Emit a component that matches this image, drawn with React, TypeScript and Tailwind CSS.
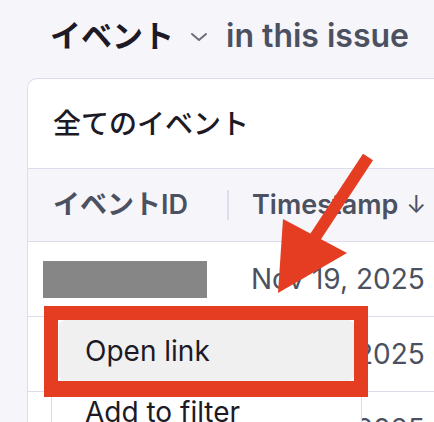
const FONT = "font-['Inter','Noto_Sans_CJK_JP',sans-serif]"

const ROWS = [
  { id: 'row-1', time: 'Nov 19, 2025 01:42:18 PM', redacted: true },
  { id: 'row-2', time: 'Nov 19, 2025 01:40:05 PM', redacted: false },
  { id: 'row-3', time: 'Nov 19, 2025 01:37:51 PM', redacted: false },
]

function ChevronDown() {
  return (
    <svg width="18" height="10" viewBox="0 0 18 10" fill="none" className="shrink-0">
      <polyline points="2,2 9,8 16,2" stroke="#6e6c7a" strokeWidth="2" strokeLinecap="round" strokeLinejoin="round" />
    </svg>
  )
}

function Arrow() {
  return (
    <svg className="pointer-events-none absolute left-0 top-0" width="434" height="422" viewBox="0 0 434 422">
      <line x1="368" y1="157" x2="312" y2="242" stroke="#e53d22" strokeWidth="12" />
      <polygon points="283,219 347,253 278,293" fill="#e53d22" />
    </svg>
  )
}

export default function App() {
  return (
    <div className={`relative h-[422px] w-[434px] overflow-hidden bg-[#f6f5fa] ${FONT}`}>
      <header className="flex h-[78px] items-center pb-[6px] pl-[50px]">
        <h1 className="text-[31px] font-bold text-[#1d1a26]">イベント</h1>
        <span className="ml-[16px] mt-[2px]">
          <ChevronDown />
        </span>
        <span className="ml-[18px] text-[32px] font-semibold text-[#4b5160]">in this issue</span>
      </header>

      <section className="ml-[27px] w-[700px] rounded-tl-[10px] border border-r-0 border-[#dedbee] bg-white">
        <div className="flex h-[89px] items-center px-[25px]">
          <h2 className="text-[28px] font-medium text-[#1d1a26]">全てのイベント</h2>
        </div>

        <div className="flex h-[74px] items-center border-y border-[#dedbee] bg-[#f6f5fa] text-[27px] font-semibold text-[#4b5160]">
          <div className="flex w-[199px] items-center pl-[25px]">イベントID</div>
          <div className="h-[30px] w-[2px] bg-[#e0dcee]" />
          <div className="flex items-center gap-[8px] pl-[23px]">
            <span>Timestamp</span>
            <span className="text-[24px] font-normal">↓</span>
          </div>
        </div>

        {ROWS.map((row) => (
          <div key={row.id} className="flex h-[75px] items-center border-b border-[#dedbee]">
            <div className="flex w-[201px] items-center pl-[15px]">
              {row.redacted && <div className="h-[37px] w-[164px] bg-[#868686]" />}
            </div>
            <div className="whitespace-nowrap pl-[22px] text-[28px] text-[#4b5160]">{row.time}</div>
          </div>
        ))}
      </section>

      <div className="absolute left-[51px] top-[312px] w-[311px] rounded-[8px] border border-[#dedbee] bg-white p-[7px] text-[28px] text-[#1d1a26]">
        <div className="flex h-[61px] items-center rounded-[6px] bg-[#f0f0f0] px-[26px]">Open link</div>
        <div className="flex h-[61px] items-center px-[26px]">Add to filter</div>
      </div>

      <div className="absolute left-[44px] top-[306px] h-[91px] w-[324px] border-[14px] border-b-[16px] border-[#e53d22]" />

      <Arrow />
    </div>
  )
}
